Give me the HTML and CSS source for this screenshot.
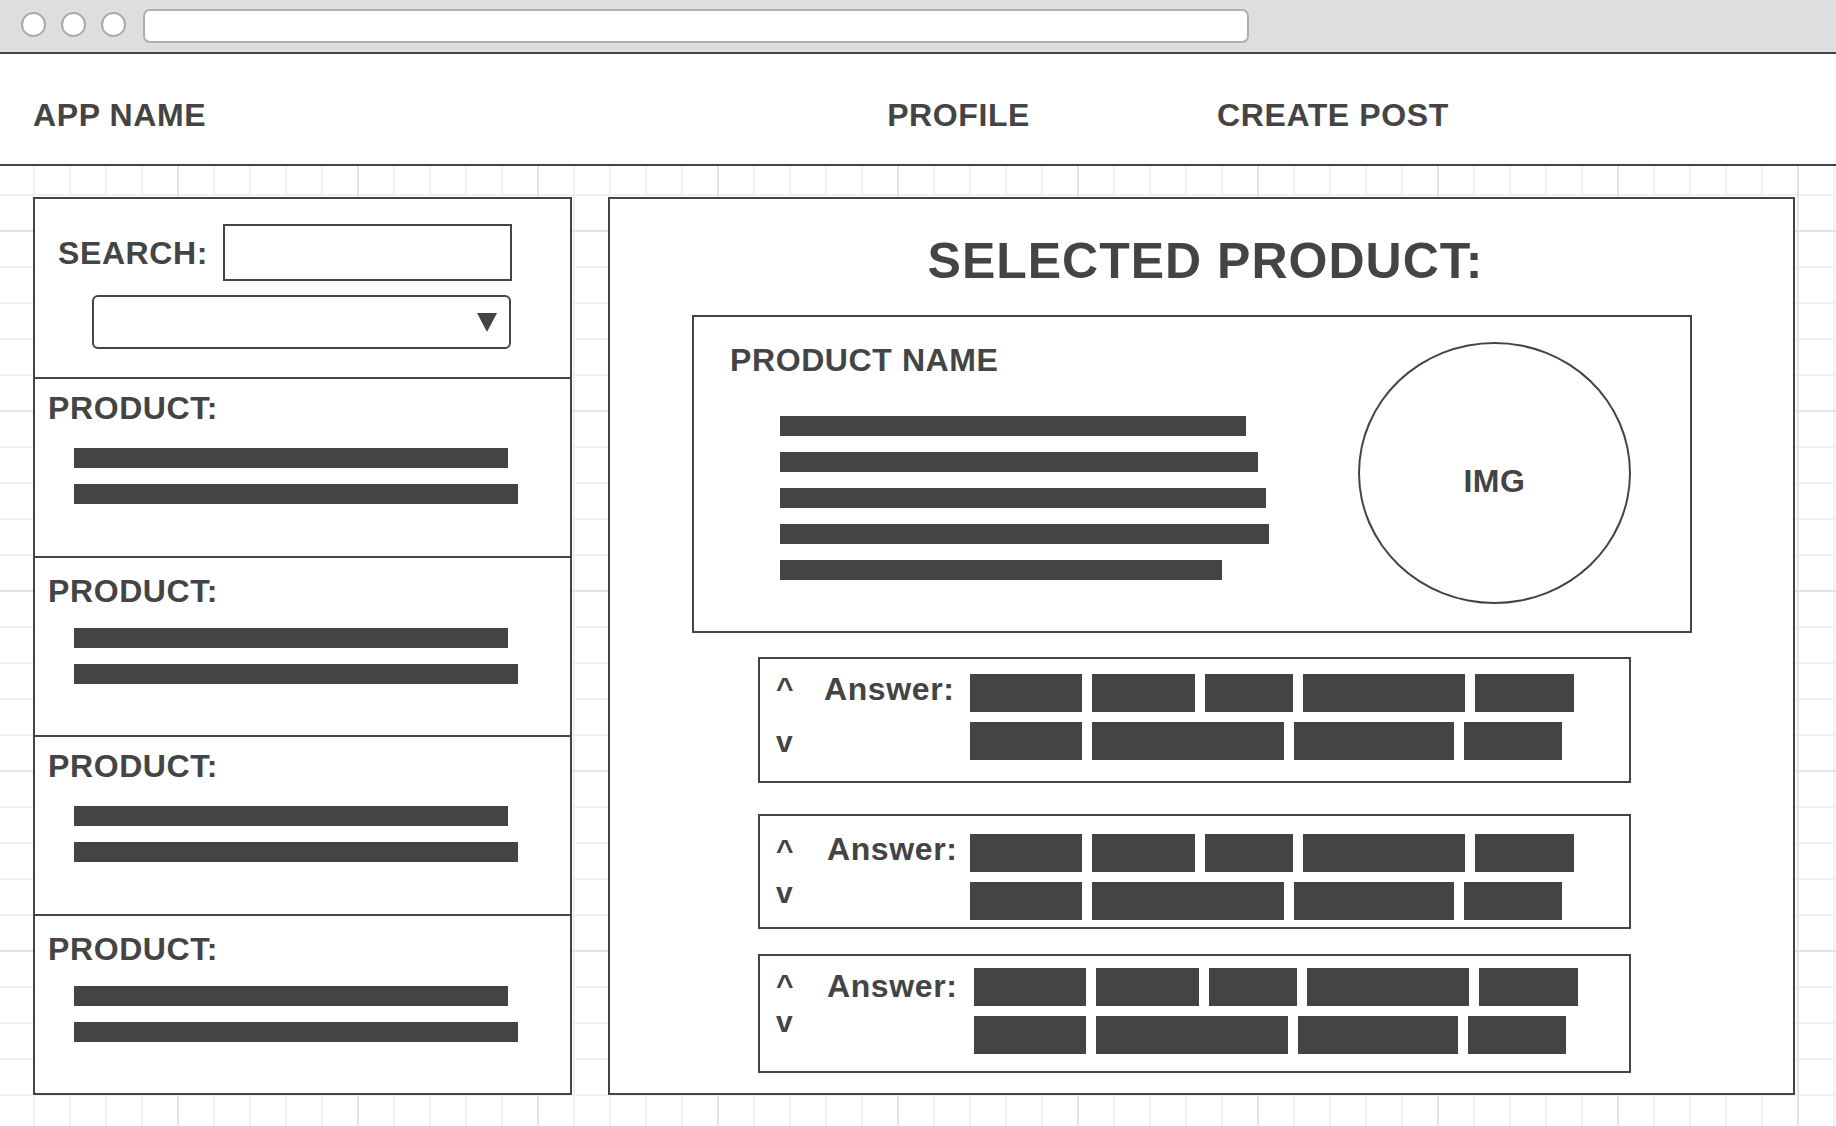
FILE: index.html
```html
<!DOCTYPE html>
<html lang="en">

<head>
  <meta charset="utf-8">
  <title>App Name - Selected Product</title>
  <link rel="stylesheet" href="styles.css">
</head>

<body>
  <div class="chrome">
    <span class="dot"></span>
    <span class="dot"></span>
    <span class="dot"></span>
    <div class="address"></div>
  </div>

  <header class="topnav">
    <div class="brand">APP NAME</div>
    <nav class="links">
      <a href="#">PROFILE</a>
      <a href="#">CREATE POST</a>
    </nav>
  </header>

  <main class="canvas">
    <aside class="sidebar">
      <div class="search">
        <div class="search-row">
          <label for="q">SEARCH:</label>
          <input id="q" type="text" class="search-input">
        </div>
        <div class="select">
          <svg width="20" height="20" viewBox="0 0 20 20"><polygon points="0,1 20,1 10,20" fill="#444"/></svg>
        </div>
      </div>

      <div class="product">
        <div class="product-title">PRODUCT:</div>
        <div class="lines">
          <div class="line" style="width:434px"></div>
          <div class="line" style="width:444px"></div>
        </div>
      </div>
      <div class="product low">
        <div class="product-title">PRODUCT:</div>
        <div class="lines">
          <div class="line" style="width:434px"></div>
          <div class="line" style="width:444px"></div>
        </div>
      </div>
      <div class="product">
        <div class="product-title">PRODUCT:</div>
        <div class="lines">
          <div class="line" style="width:434px"></div>
          <div class="line" style="width:444px"></div>
        </div>
      </div>
      <div class="product low">
        <div class="product-title">PRODUCT:</div>
        <div class="lines">
          <div class="line" style="width:434px"></div>
          <div class="line" style="width:444px"></div>
        </div>
      </div>
    </aside>

    <section class="detail">
      <h1>SELECTED PRODUCT:</h1>

      <div class="card">
        <div class="card-text">
          <h2>PRODUCT NAME</h2>
          <div class="lines">
            <div class="line" style="width:466px"></div>
            <div class="line" style="width:478px"></div>
            <div class="line" style="width:486px"></div>
            <div class="line" style="width:489px"></div>
            <div class="line" style="width:442px"></div>
          </div>
        </div>
        <div class="img-ph">IMG</div>
      </div>

      <div class="answer answer-1">
        <div class="vote"><span>^</span><span>v</span></div>
        <div class="answer-label">Answer:</div>
        <div class="words">
          <div class="words-row">
            <span class="word" style="width:112px"></span>
            <span class="word" style="width:103px"></span>
            <span class="word" style="width:88px"></span>
            <span class="word" style="width:162px"></span>
            <span class="word" style="width:99px"></span>
          </div>
          <div class="words-row">
            <span class="word" style="width:112px"></span>
            <span class="word" style="width:192px"></span>
            <span class="word" style="width:160px"></span>
            <span class="word" style="width:98px"></span>
          </div>
        </div>
      </div>

      <div class="answer answer-2">
        <div class="vote"><span>^</span><span>v</span></div>
        <div class="answer-label">Answer:</div>
        <div class="words">
          <div class="words-row">
            <span class="word" style="width:112px"></span>
            <span class="word" style="width:103px"></span>
            <span class="word" style="width:88px"></span>
            <span class="word" style="width:162px"></span>
            <span class="word" style="width:99px"></span>
          </div>
          <div class="words-row">
            <span class="word" style="width:112px"></span>
            <span class="word" style="width:192px"></span>
            <span class="word" style="width:160px"></span>
            <span class="word" style="width:98px"></span>
          </div>
        </div>
      </div>

      <div class="answer answer-3">
        <div class="vote"><span>^</span><span>v</span></div>
        <div class="answer-label">Answer:</div>
        <div class="words">
          <div class="words-row">
            <span class="word" style="width:112px"></span>
            <span class="word" style="width:103px"></span>
            <span class="word" style="width:88px"></span>
            <span class="word" style="width:162px"></span>
            <span class="word" style="width:99px"></span>
          </div>
          <div class="words-row">
            <span class="word" style="width:112px"></span>
            <span class="word" style="width:192px"></span>
            <span class="word" style="width:160px"></span>
            <span class="word" style="width:98px"></span>
          </div>
        </div>
      </div>
    </section>
  </main>
</body>

</html>
```

FILE: styles.css
```css
* {
  box-sizing: border-box;
}

body {
  margin: 0;
  font-family: "Liberation Sans", Arial, sans-serif;
  font-weight: bold;
  letter-spacing: 0.6px;
  color: #444;
  background: #fff;
}

/* fake browser window */
.chrome {
  display: flex;
  align-items: flex-start;
  height: 54px;
  padding-left: 21px;
  background: #dedede;
  border-bottom: 2px solid #444;
}

.dot {
  width: 25px;
  height: 25px;
  margin: 12px 15px 0 0;
  border: 2px solid #aaa;
  border-radius: 50%;
  background: #fff;
}

.address {
  width: 1106px;
  height: 34px;
  margin: 9px 0 0 2px;
  border: 2px solid #b0b0b0;
  border-radius: 7px;
  background: #fff;
}

.topnav {
  display: flex;
  height: 112px;
  padding: 45px 0 0 33px;
  font-size: 32px;
  line-height: 32px;
  border-bottom: 2px solid #444;
}

.links {
  display: flex;
  gap: 187px;
  margin-left: 681px;
}

.links a {
  color: inherit;
  text-decoration: none;
}

/* grid paper */
.canvas {
  display: flex;
  align-items: flex-start;
  gap: 36px;
  height: 960px;
  padding: 31px 0 0 33px;
  background-color: #fff;
  background-image:
    linear-gradient(to right, #e4e4e4 2px, transparent 2px),
    linear-gradient(to bottom, #e4e4e4 2px, transparent 2px),
    linear-gradient(to right, #f0f0f0 2px, transparent 2px),
    linear-gradient(to bottom, #f0f0f0 2px, transparent 2px);
  background-size: 180px 180px, 180px 180px, 36px 36px, 36px 36px;
  background-position: 177px 0, 0 64px, 33px 0, 0 28px;
}

.sidebar {
  width: 539px;
  border: 2px solid #444;
  background: #fff;
}

.search {
  height: 178px;
  padding: 25px 0 0 23px;
}

.search-row {
  display: flex;
  align-items: center;
  gap: 15px;
  font-size: 32px;
  line-height: 32px;
}

.search-input {
  width: 289px;
  height: 57px;
  margin: 0;
  padding: 0 8px;
  border: 2px solid #444;
  background: #fff;
  outline: none;
}

.select {
  display: flex;
  align-items: center;
  justify-content: flex-end;
  width: 419px;
  height: 54px;
  margin: 14px 0 0 34px;
  padding-right: 12px;
  border: 2px solid #444;
  border-radius: 6px;
}

.product {
  height: 179px;
  padding: 13px 0 0 13px;
  border-top: 2px solid #444;
}

.product.low {
  padding-top: 17px;
}

.product-title {
  font-size: 32px;
  line-height: 32px;
}

.lines {
  display: flex;
  flex-direction: column;
  gap: 16px;
}

.product .lines {
  margin: 24px 0 0 26px;
}

.product.low .lines {
  margin-top: 21px;
}

.line {
  height: 20px;
  background: #444;
}

.detail {
  width: 1187px;
  height: 898px;
  padding-top: 37px;
  border: 2px solid #444;
  background: #fff;
}

.detail h1 {
  margin: 0;
  padding-left: 8px;
  font-size: 50px;
  line-height: 50px;
  letter-spacing: 1px;
  text-align: center;
}

.card {
  display: flex;
  justify-content: space-between;
  width: 1000px;
  height: 318px;
  margin: 29px 0 0 82px;
  border: 2px solid #444;
}

.card-text {
  padding: 27px 0 0 36px;
}

.card h2 {
  margin: 0;
  font-size: 32px;
  line-height: 32px;
}

.card .lines {
  margin: 40px 0 0 50px;
}

.img-ph {
  display: flex;
  align-items: center;
  justify-content: center;
  width: 273px;
  height: 262px;
  margin: 25px 59px 0 0;
  padding-top: 16px;
  border: 2px solid #444;
  border-radius: 50%;
  font-size: 32px;
}

/* answers */
.answer {
  display: flex;
  align-items: flex-start;
  width: 873px;
  margin-left: 148px;
  padding-left: 16px;
  border: 2px solid #444;
}

.answer-1 {
  margin-top: 24px;
  padding-top: 15px;
  padding-bottom: 21px;
}

.answer-2 {
  margin-top: 31px;
  padding-top: 18px;
  padding-bottom: 7px;
}

.answer-3 {
  margin-top: 25px;
  padding-top: 12px;
  padding-bottom: 17px;
}

.vote {
  display: flex;
  flex-direction: column;
  width: 48px;
  font-size: 30px;
  line-height: 30px;
}

.answer-1 .vote {
  margin-top: -1px;
  gap: 24px;
}

.answer-2 .vote {
  width: 51px;
  margin-top: 1px;
  gap: 13px;
}

.answer-3 .vote {
  width: 51px;
  margin-top: 2px;
  gap: 7px;
}

.answer-label {
  width: 146px;
  margin-top: -1px;
  font-size: 32px;
  line-height: 32px;
}

.answer-2 .answer-label {
  width: 143px;
}

.answer-3 .answer-label {
  width: 147px;
  margin-top: 2px;
}

.words {
  display: flex;
  flex-direction: column;
  gap: 10px;
}

.words-row {
  display: flex;
  gap: 10px;
}

.word {
  height: 38px;
  background: #444;
}
```
